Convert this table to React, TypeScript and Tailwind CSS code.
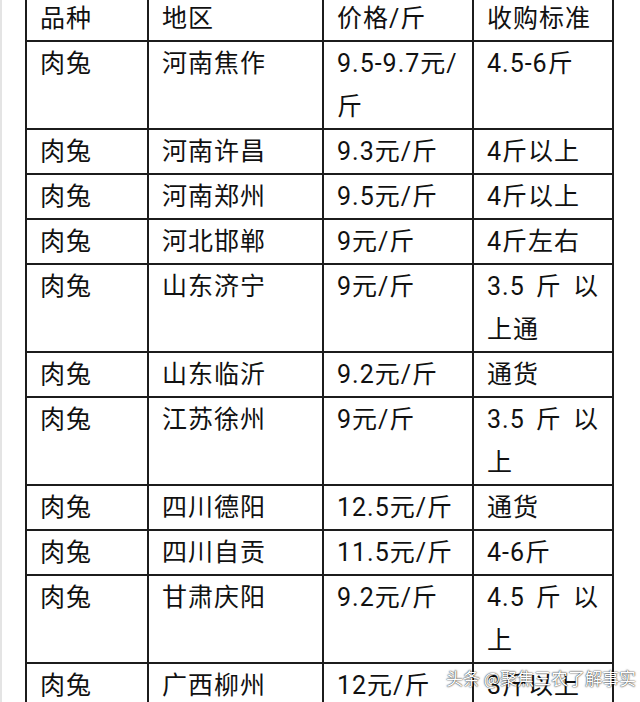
const ROWS: string[][][] = [
  [["品种"], ["地区"], ["价格/斤"], ["收购标准"]],
  [["肉兔"], ["河南焦作"], ["9.5-9.7元/", "斤"], ["4.5-6斤"]],
  [["肉兔"], ["河南许昌"], ["9.3元/斤"], ["4斤以上"]],
  [["肉兔"], ["河南郑州"], ["9.5元/斤"], ["4斤以上"]],
  [["肉兔"], ["河北邯郸"], ["9元/斤"], ["4斤左右"]],
  [["肉兔"], ["山东济宁"], ["9元/斤"], ["3.5|斤|以", "上通"]],
  [["肉兔"], ["山东临沂"], ["9.2元/斤"], ["通货"]],
  [["肉兔"], ["江苏徐州"], ["9元/斤"], ["3.5|斤|以", "上"]],
  [["肉兔"], ["四川德阳"], ["12.5元/斤"], ["通货"]],
  [["肉兔"], ["四川自贡"], ["11.5元/斤"], ["4-6斤"]],
  [["肉兔"], ["甘肃庆阳"], ["9.2元/斤"], ["4.5|斤|以", "上"]],
  [["肉兔"], ["广西柳州"], ["12元/斤"], ["3斤以上"]],
];

// a "|" marks a justified line: its parts are spread across the cell
function Line({ text }: { text: string }) {
  if (text.includes("|")) {
    return (
      <div className="flex justify-between">
        {text.split("|").map((p) => (
          <span key={p}>{p}</span>
        ))}
      </div>
    );
  }
  return <div>{text}</div>;
}

export default function App() {
  return (
    <div className="relative h-[702px] w-[640px] overflow-hidden border-l-2 border-[#e4e4e4] bg-white">
      <div
        className="ml-[23px] mt-[-5px] grid w-[589px] grid-cols-[120px_173px_148px_138px] gap-[2px] bg-[#1c1c1c] p-[2px] text-[25px] leading-[43px] tracking-[1px] text-[#111]"
        style={{ fontFamily: 'Roboto, "Noto Sans CJK SC", sans-serif' }}
      >
        {ROWS.map((row, i) =>
          row.map((cell, j) => (
            <div key={`${i}-${j}`} className="bg-white px-[13px]">
              {cell.map((line, k) => (
                <Line key={k} text={line} />
              ))}
            </div>
          )),
        )}
      </div>
      <div
        className="absolute left-[444px] top-[667px] text-[17px] leading-[22px] text-white"
        style={{
          fontFamily: '"Noto Sans CJK SC", sans-serif',
          textShadow: "0 0 2px rgba(0,0,0,0.7), 0 0 1px rgba(0,0,0,0.8)",
        }}
      >
        头条 @聚焦三农了解事实
      </div>
    </div>
  );
}
